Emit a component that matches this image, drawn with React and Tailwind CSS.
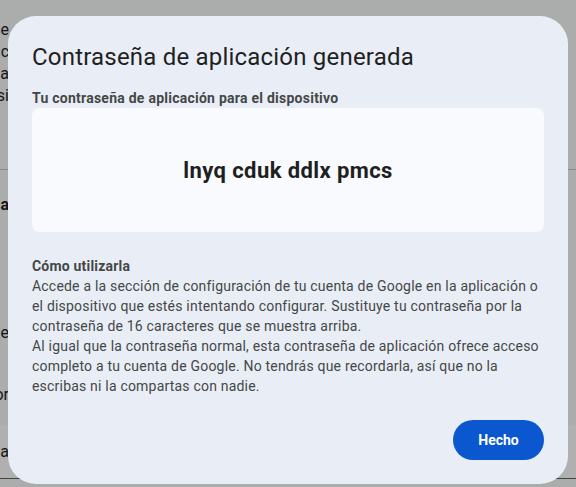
import React from 'react';

const font = { fontFamily: 'Roboto, "Noto Sans", Arial, sans-serif' };

// Page content sitting behind the dialog; only its right ends peek out at the left edge
const Line = ({ children, className = '' }) => (
    <p className={`-ml-[391px] w-[400px] text-right whitespace-nowrap ${className}`}>{children}</p>
);

const BackgroundPage = () => (
    <div className="h-[487px] w-full bg-[#f8f9fa] text-[#1f1f1f] text-[16px] leading-[22px] overflow-hidden">
        <div className="pt-[19px]">
            <Line>Para usarla, introduce la clave de</Line>
            <Line>la cuenta en esta sección o la lic</Line>
            <Line>Google para ver tu contraseña de la</Line>
            <Line>aplicación y el dispositivo que usas si</Line>
        </div>
        <div className="mt-[62px] border-t border-[#c4c7c5]" />
        <Line className="mt-[24px] font-bold">Tus contraseñas de la</Line>
        <Line className="mt-[106px]">No tienes contraseñas de</Line>
        <Line className="mt-[40px]">Activar aplicación por</Line>
        <div className="mt-[19px] h-[54px] bg-white border-b border-[#5f6368] pt-[16px]">
            <Line>Contraseña nueva para la</Line>
        </div>
    </div>
);

const App = () => {
    return (
        <div className="relative w-[576px] h-[487px] overflow-hidden" style={font}>
            <BackgroundPage />
            <div className="absolute inset-0 bg-black/[0.31]" />

            <div className="absolute left-[8px] top-[16px] w-[560px] h-[468px] rounded-[28px] bg-[#e9eef6] px-6 pt-[25px] pb-6 flex flex-col">
                <h2 className="text-[24px] leading-[32px] text-[#1f1f1f] font-normal tracking-[0.2px]">
                    Contraseña de aplicación generada
                </h2>

                <p className="mt-[15px] text-[14px] leading-[20px] font-bold text-[#444746] tracking-[0.25px]">
                    Tu contraseña de aplicación para el dispositivo
                </p>

                <div className="h-[124px] rounded-lg bg-[#f8fafd] flex items-center justify-center">
                    <span className="text-[22px] font-bold text-[#1f1f1f] tracking-[0.4px]">lnyq cduk ddlx pmcs</span>
                </div>

                <div className="mt-[24px] text-[14px] leading-[20px] text-[#444746] tracking-[0.2px]">
                    <p className="font-bold">Cómo utilizarla</p>
                    <p>
                        Accede a la sección de configuración de tu cuenta de Google en la aplicación o
                        el dispositivo que estés intentando configurar. Sustituye tu contraseña por la
                        contraseña de 16 caracteres que se muestra arriba.
                    </p>
                    <p>
                        Al igual que la contraseña normal, esta contraseña de aplicación ofrece acceso
                        completo a tu cuenta de Google. No tendrás que recordarla, así que no la
                        escribas ni la compartas con nadie.
                    </p>
                </div>

                <div className="mt-auto flex justify-end">
                    <button className="h-10 w-[91px] rounded-full bg-[#0b57d0] text-white text-[14px] font-bold">
                        Hecho
                    </button>
                </div>
            </div>
        </div>
    );
};

export default App;
